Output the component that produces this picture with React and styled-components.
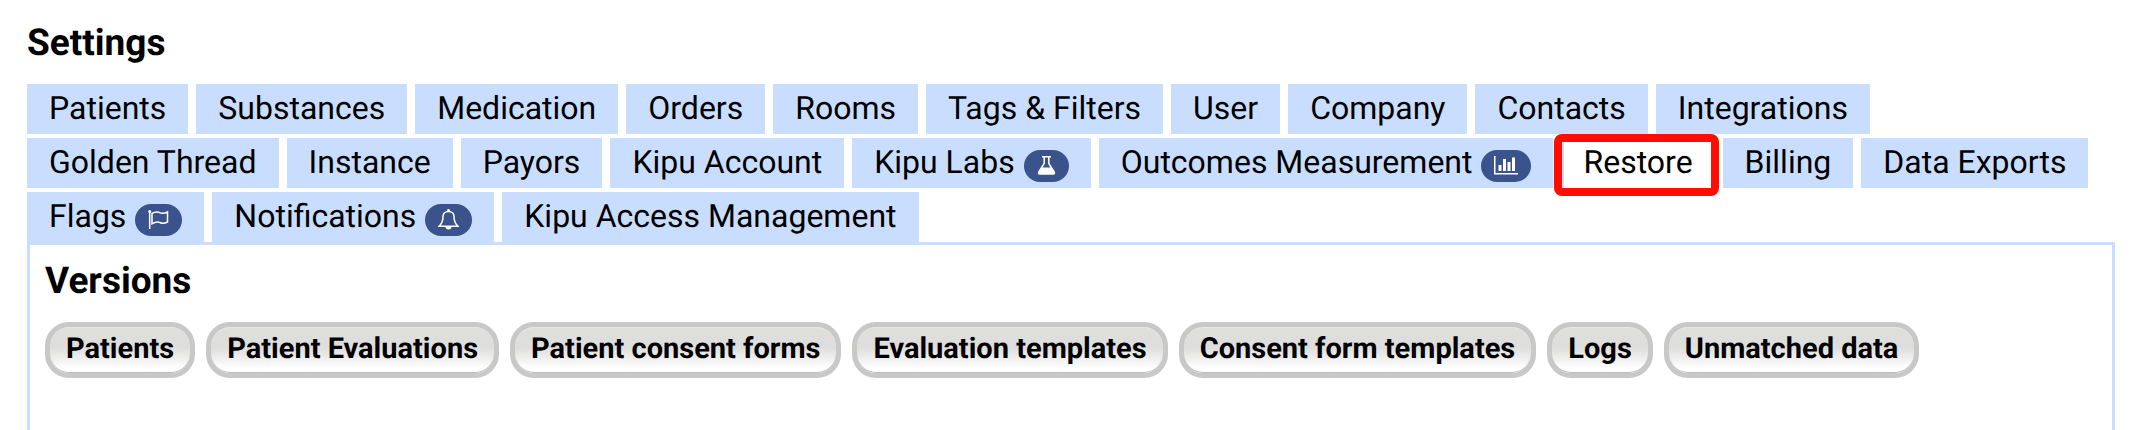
import React from "react";
import styled, { createGlobalStyle } from "styled-components";

const GlobalStyle = createGlobalStyle`
  * {
    box-sizing: border-box;
  }
  body {
    margin: 0;
    background: #fff;
    color: #000;
    font-family: Roboto, "Liberation Sans", sans-serif;
    font-size: 32px;
    text-rendering: geometricPrecision;
  }
`;

const Page = styled.main`
  display: flex;
  flex-direction: column;
  min-height: 100vh;
  padding: 20px 23px 0 27px;
`;

const Title = styled.h1`
  margin: 0 0 16px;
  font-size: 37px;
  line-height: 48px;
  font-weight: 700;
`;

const Tabs = styled.nav`
  display: flex;
  flex-wrap: wrap;
  gap: 4px 8px;
`;

const Tab = styled.a`
  display: flex;
  align-items: center;
  gap: 9px;
  height: 50px;
  padding: 0 22px 2px;
  background: ${props => (props.$active ? "#fff" : "#c9deff")};
  color: #000;
  line-height: 48px;
  text-decoration: none;
  white-space: nowrap;
`;

const ActiveTab = styled(Tab)`
  position: relative;
  padding-left: 19px;
  border-left: 3px solid #c9deff;
  &::after {
    content: "";
    position: absolute;
    inset: -4px -4px -8px -10px;
    border: 8px solid #ff0d00;
    border-radius: 8px;
  }
`;

const Badge = styled.span`
  display: flex;
  align-items: center;
  height: 32px;
  margin-top: 8px;
  padding: 0 13px 2px;
  border-radius: 16px;
  background: #3b538c;
  color: #fff;
`;

const Panel = styled.section`
  flex: 1;
  padding: 13px 15px;
  border: 3px solid #c9deff;
  border-bottom: 0;
`;

const PanelTitle = styled.h2`
  margin: 0 0 16px;
  font-size: 37px;
  line-height: 48px;
  font-weight: 700;
`;

const Buttons = styled.div`
  display: flex;
  flex-wrap: wrap;
  gap: 11px;
`;

const Button = styled.button`
  height: 56px;
  padding: 0 16px 2px;
  border: 5px solid #c8c8c8;
  border-radius: 24px;
  background: linear-gradient(#dededd 45%, #fff 90%);
  box-shadow: inset 0 1px 0 #e8e8e8, inset 0 -1px 0 #bcbcbc;
  color: #000;
  font-family: inherit;
  font-size: 29px;
  font-weight: 700;
  white-space: nowrap;
  text-rendering: inherit;
`;

const FlaskIcon = () => (
  <svg width="19" height="19" viewBox="0 0 19 19" aria-hidden="true">
    <path
      d="M5 .8h9M7.2 1v6.5L1.8 16c-.7 1.3-.2 2 1 2h13.4c1.2 0 1.7-.7 1-2l-5.4-8.500V1"
      fill="none"
      stroke="currentColor"
      strokeWidth="1.5"
    />
    <path d="M5 11.500h9l4 6.500H1z" fill="currentColor" />
  </svg>
);

const ChartIcon = () => (
  <svg width="24" height="19" viewBox="0 0 24 19" aria-hidden="true">
    <path
      d="M0 0h1.500v17H24v1.500H0zM4.500 9h3v6h-3zM9 3h3v12H9zM13.500 6h3v9h-3zM18 1.500h3V15h-3z"
      fill="currentColor"
    />
  </svg>
);

const FlagIcon = () => (
  <svg width="21" height="19" viewBox="0 0 21 19" aria-hidden="true">
    <circle cx="1.700" cy="1.600" r="1.500" fill="currentColor" />
    <path
      d="M1.700 1.500V19M4 3.500c4-2.500 6-1.800 8.500-.6 2.300 1 4.300.5 7-.9v10c-2.700 1.500-4.700 1.900-7 .8-2.500-1.200-4.500-1.300-8.500 1z"
      fill="none"
      stroke="currentColor"
      strokeWidth="1.500"
    />
  </svg>
);

const BellIcon = () => (
  <svg width="21" height="21" viewBox="0 0 21 21" aria-hidden="true">
    <path
      d="M1 17.200c3-2.600 4-5.500 4-9.700 0-3 2.300-5 5.500-5s5.500 2 5.500 5c0 4.200 1 7.100 4 9.700z"
      fill="none"
      stroke="currentColor"
      strokeWidth="1.500"
    />
    <circle cx="10.500" cy="1.500" r="1.400" fill="currentColor" />
    <path d="M7.500 17.500h6a3 3 0 0 1-6 0z" fill="currentColor" />
  </svg>
);

const tabs = [
  { label: "Patients" },
  { label: "Substances" },
  { label: "Medication" },
  { label: "Orders" },
  { label: "Rooms" },
  { label: "Tags & Filters" },
  { label: "User" },
  { label: "Company" },
  { label: "Contacts" },
  { label: "Integrations" },
  { label: "Golden Thread" },
  { label: "Instance" },
  { label: "Payors" },
  { label: "Kipu Account" },
  { label: "Kipu Labs", icon: FlaskIcon },
  { label: "Outcomes Measurement", icon: ChartIcon },
  { label: "Restore", active: true },
  { label: "Billing" },
  { label: "Data Exports" },
  { label: "Flags", icon: FlagIcon },
  { label: "Notifications", icon: BellIcon },
  { label: "Kipu Access Management" }
];

const versions = [
  "Patients",
  "Patient Evaluations",
  "Patient consent forms",
  "Evaluation templates",
  "Consent form templates",
  "Logs",
  "Unmatched data"
];

const TabItem = ({ label, icon: Icon, active = false }) => {
  if (active) {
    return (
      <ActiveTab href="#" $active aria-current="page">
        {label}
      </ActiveTab>
    );
  }
  return (
    <Tab href="#">
      {label}
      {Icon && (
        <Badge>
          <Icon />
        </Badge>
      )}
    </Tab>
  );
};

const App = () => (
  <>
    <GlobalStyle />
    <Page>
      <Title>Settings</Title>
      <Tabs aria-label="Settings">
        {tabs.map(tab => (
          <TabItem key={tab.label} {...tab} />
        ))}
      </Tabs>
      <Panel>
        <PanelTitle>Versions</PanelTitle>
        <Buttons>
          {versions.map(name => (
            <Button key={name} type="button">
              {name}
            </Button>
          ))}
        </Buttons>
      </Panel>
    </Page>
  </>
);

export default App;
